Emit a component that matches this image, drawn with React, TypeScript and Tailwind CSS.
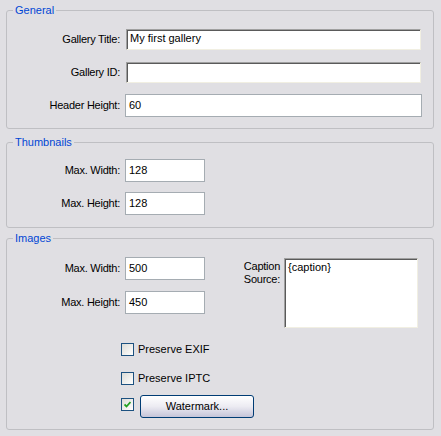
const font = { fontFamily: '"Liberation Sans", Arial, sans-serif' };

function Group({ title, className, children }: { title: string; className?: string; children: React.ReactNode }) {
  return (
    <fieldset className={`rounded-[3px] border border-[#bfbfc3] ${className ?? ""}`}>
      <legend className="ml-[6px] px-[2px] text-[11px] leading-[13px] text-[#0046d5]">{title}</legend>
      {children}
    </fieldset>
  );
}

function SunkenInput({ value, className }: { value: string; className?: string }) {
  return (
    <div
      className={`h-[21px] border-t border-l border-r border-b border-t-[#a0a0a0] border-l-[#a0a0a0] border-r-[#f1efe2] border-b-[#f1efe2] bg-white pl-[2px] text-[11px] leading-[17px] text-black shadow-[inset_1px_1px_0_#5a5a5a] ${className ?? ""}`}
    >
      <span className="pl-[1px]">{value}</span>
    </div>
  );
}

function FlatInput({ value, className }: { value: string; className?: string }) {
  return (
    <div className={`h-[23px] border border-[#a5acb2] bg-white pl-[3px] text-[11px] leading-[21px] text-black ${className ?? ""}`}>
      {value}
    </div>
  );
}

function Row({ label, children, className }: { label: string; children: React.ReactNode; className?: string }) {
  return (
    <div className={`flex items-center ${className ?? ""}`}>
      <div className="w-[114px] pr-[1px] text-right text-[11px] leading-[13px] tracking-[-0.25px] text-black">{label}</div>
      {children}
    </div>
  );
}

function Checkbox({ checked }: { checked?: boolean }) {
  return (
    <div className="flex h-[13px] w-[13px] items-center justify-center border border-[#1c5180] bg-gradient-to-br from-[#dcdcd7] to-white">
      {checked ? (
        <svg width="7" height="7" viewBox="0 0 7 7">
          <path d="M0.5 3.5 L2.5 5.5 L6.5 1" fill="none" stroke="#21a121" strokeWidth="1.8" />
        </svg>
      ) : null}
    </div>
  );
}

export default function App() {
  return (
    <div className="h-[436px] w-[441px] bg-[#e0dfe3] pl-[6px] pr-[7px] pt-[4px] text-black" style={font}>
      <Group title="General" className="pb-[11px]">
        <Row label="Gallery Title:" className="mt-[12px]">
          <SunkenInput value="My first gallery" className="ml-[5px] w-[295px]" />
        </Row>
        <Row label="Gallery ID:" className="mt-[12px]">
          <SunkenInput value="" className="ml-[5px] w-[295px]" />
        </Row>
        <Row label="Header Height:" className="mt-[11px]">
          <FlatInput value="60" className="ml-[4px] w-[297px]" />
        </Row>
      </Group>

      <Group title="Thumbnails" className="mt-[7px] pb-[12px]">
        <Row label="Max. Width:" className="mt-[10px]">
          <FlatInput value="128" className="ml-[4px] w-[80px]" />
        </Row>
        <Row label="Max. Height:" className="mt-[10px]">
          <FlatInput value="128" className="ml-[4px] w-[80px]" />
        </Row>
      </Group>

      <Group title="Images" className="mt-[4px] pb-[11px]">
        <div className="mt-[12px] flex">
          <div className="flex flex-col">
            <Row label="Max. Width:">
              <FlatInput value="500" className="ml-[4px] w-[80px]" />
            </Row>
            <Row label="Max. Height:" className="mt-[11px]">
              <FlatInput value="450" className="ml-[4px] w-[80px]" />
            </Row>
          </div>
          <div className="mt-[1px] flex">
            <div className="mt-[2px] w-[75px] text-right text-[11px] leading-[13px] tracking-[-0.25px]">
              Caption
              <br />
              Source:
            </div>
            <div className="ml-[4px] h-[70px] w-[134px] border border-t-[#a0a0a0] border-l-[#a0a0a0] border-r-[#f1efe2] border-b-[#f1efe2] bg-white pl-[3px] pt-[2px] text-[11px] leading-[13px] shadow-[inset_1px_1px_0_#5a5a5a]">
              {"{caption}"}
            </div>
          </div>
        </div>

        <div className="ml-[114px] mt-[15px] flex items-center gap-[4px] text-[11px] leading-[13px]">
          <Checkbox />
          <span>Preserve EXIF</span>
        </div>
        <div className="ml-[114px] mt-[16px] flex items-center gap-[4px] text-[11px] leading-[13px]">
          <Checkbox />
          <span>Preserve IPTC</span>
        </div>
        <div className="ml-[114px] mt-[10px] flex items-start gap-[6px]">
          <div className="mt-[3px]">
            <Checkbox checked />
          </div>
          <button className="h-[23px] w-[114px] rounded-[3px] border border-[#003c74] bg-gradient-to-b from-white via-[#ecebf2] to-[#c5c4d8] text-[11px] leading-[21px] text-black">
            Watermark...
          </button>
        </div>
      </Group>
    </div>
  );
}
